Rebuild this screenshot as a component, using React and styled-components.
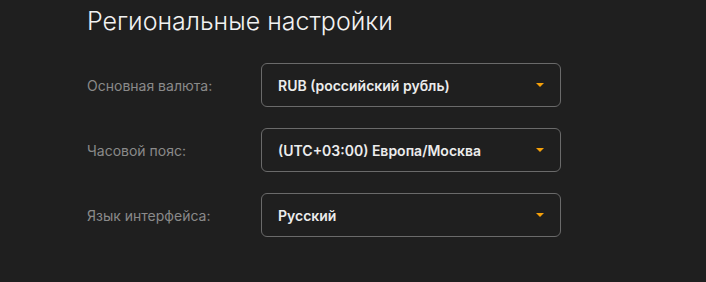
import React from 'react'
import styled, { createGlobalStyle } from 'styled-components'

const GlobalStyle = createGlobalStyle`
    html, body {
        margin: 0;
        background: #1f1f1f;
    }
    body {
        font-family: 'Inter', 'Noto Sans', sans-serif;
    }
`

const StyledPage = styled.div`
    width: 706px;
    height: 282px;
    box-sizing: border-box;
    padding: 5px 0 0 87px;
    background: #1f1f1f;
`

const StyledHeading = styled.h2`
    margin: 0 0 26px 0;
    font-size: 25px;
    line-height: 32px;
    font-weight: 300;
    color: #f2f2f2;
`

const StyledForm = styled.div`
    display: grid;
    grid-template-columns: 174px 300px;
    row-gap: 21px;
    align-items: center;
`

const StyledLabel = styled.span`
    font-size: 14px;
    color: #8a8a8a;
`

const StyledSelect = styled.div`
    box-sizing: border-box;
    height: 44px;
    display: flex;
    align-items: center;
    justify-content: space-between;
    padding: 0 16px 0 16px;
    border: 1px solid #6a6a6a;
    border-radius: 6px;
    font-size: 14px;
    font-weight: 600;
    color: #ececec;
`

const StyledCaret = styled.span`
    width: 0;
    height: 0;
    border-left: 4px solid transparent;
    border-right: 4px solid transparent;
    border-top: 4px solid #f5a00a;
`

const rows = [
    { label: 'Основная валюта:', value: 'RUB (российский рубль)' },
    { label: 'Часовой пояс:', value: '(UTC+03:00) Европа/Москва' },
    { label: 'Язык интерфейса:', value: 'Русский' },
]

export default function App() {
    return (
        <StyledPage>
            <GlobalStyle />
            <StyledHeading>Региональные настройки</StyledHeading>
            <StyledForm>
                {rows.map(row => (
                    <React.Fragment key={row.label}>
                        <StyledLabel>{row.label}</StyledLabel>
                        <StyledSelect>
                            {row.value}
                            <StyledCaret />
                        </StyledSelect>
                    </React.Fragment>
                ))}
            </StyledForm>
        </StyledPage>
    )
}
